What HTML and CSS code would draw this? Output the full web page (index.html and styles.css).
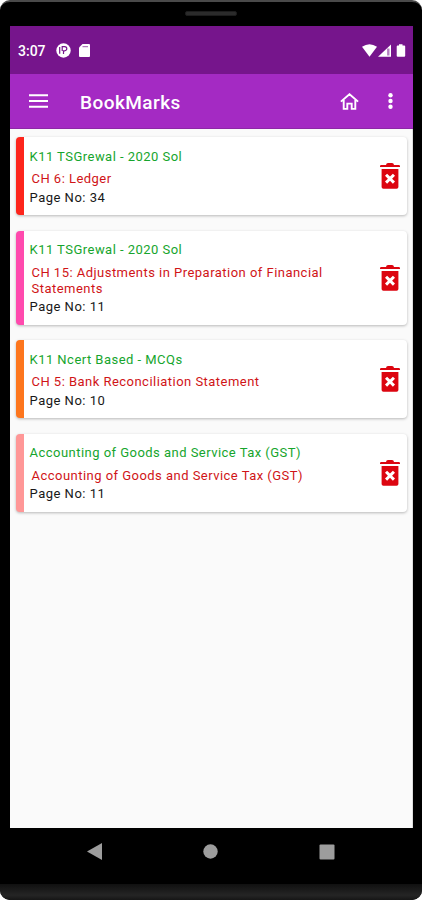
FILE: index.html
```html
<!DOCTYPE html>
<html lang="en">
<head>
<meta charset="utf-8">
<title>BookMarks</title>
<link rel="stylesheet" href="styles.css">
</head>
<body>
<svg class="defs" width="0" height="0" aria-hidden="true">
  <symbol id="trash" viewBox="0 0 20 26">
    <path d="M0 3.2Q0 2.1 1.2 2.1H6Q6.2.1 8 .1h4q1.800 0 2 2h4.800Q20 2.100 20 3.200v.9H0z"/>
    <path fill-rule="evenodd" d="M1.600 6h16.800v18q0 1.800-1.800 1.800H3.400q-1.800 0-1.800-1.800zM5 12.800 7.900 15.700 5 18.600 7.100 20.700 10 17.800 12.900 20.700 15 18.600 12.100 15.700 15 12.800 12.900 10.700 10 13.600 7.100 10.700z"/>
  </symbol>
</svg>
<div class="phone">
  <div class="speaker-row"><span class="speaker"></span></div>
  <main class="screen">
    <div class="status">
      <span class="time">3:07</span>
      <svg class="notif" width="15" height="15" viewBox="0 0 15 15"><circle cx="7.500" cy="7.500" r="7.200" fill="#fff"/><path d="M3.700 4v6.800M7.500 11V7.800h1.200a2.100 2.100 0 0 0 0-4.200H6.200V8" fill="none" stroke="#76158c" stroke-width="1.200"/></svg>
      <svg class="sd" width="11" height="13" viewBox="0 0 11 13"><path d="M3.500 0H10q1 0 1 1v11q0 1-1 1H1q-1 0-1-1V3.500z" fill="#fff"/><path d="M3.500 2.700h5.500" stroke="#76158c" stroke-width="1" opacity=".7"/></svg>
      <svg class="radios" width="44" height="13" viewBox="0 0 44 13"><path d="M0 2.800Q7.500-2.500 15 2.800L7.500 12.800z" fill="#fff"/><path d="M29 .5V12.800H16z" fill="#fff"/><path d="M26.300 4.500v7" stroke="#76158c" stroke-width="2.400" opacity=".55"/><path d="M37 .2h3.500v1.400h1.700q1 0 1 1v9.200q0 1-1 1h-6.500q-1 0-1-1V2.600q0-1 1-1H37z" fill="#fff"/></svg>
    </div>
    <header class="appbar">
      <svg width="19" height="14" viewBox="0 0 19 14"><path d="M0 1.200h19M0 7h19M0 12.800h19" stroke="#fff" stroke-width="2.100"/></svg>
      <h1>BookMarks</h1>
      <svg class="home" width="19" height="17" viewBox="0 0 19 17"><path d="M.9 8.600 9.500 1.200l8.600 7.400M3.700 7v8.900h3.600v-5.300h4.400v5.300h3.600V7" fill="none" stroke="#fff" stroke-width="1.900"/></svg>
      <svg class="more" width="5" height="16" viewBox="0 0 5 16" fill="#fff"><circle cx="2.500" cy="2.200" r="2.200"/><circle cx="2.500" cy="8" r="2.200"/><circle cx="2.500" cy="13.800" r="2.200"/></svg>
    </header>
    <section class="list">
      <article class="card red">
        <div class="info"><p class="book">K11 TSGrewal - 2020 Sol</p><p class="chapter">CH 6: Ledger</p><p class="page">Page No: 34</p></div>
        <svg class="trash"><use href="#trash"/></svg>
      </article>
      <article class="card pink">
        <div class="info"><p class="book">K11 TSGrewal - 2020 Sol</p><p class="chapter">CH 15: Adjustments in Preparation of Financial Statements</p><p class="page">Page No: 11</p></div>
        <svg class="trash"><use href="#trash"/></svg>
      </article>
      <article class="card orange">
        <div class="info"><p class="book">K11 Ncert Based - MCQs</p><p class="chapter">CH 5: Bank Reconciliation Statement</p><p class="page">Page No: 10</p></div>
        <svg class="trash"><use href="#trash"/></svg>
      </article>
      <article class="card salmon">
        <div class="info"><p class="book">Accounting of Goods and Service Tax (GST)</p><p class="chapter">Accounting of Goods and Service Tax (GST)</p><p class="page">Page No: 11</p></div>
        <svg class="trash"><use href="#trash"/></svg>
      </article>
    </section>
  </main>
  <nav class="navbar">
    <svg width="15" height="17" viewBox="0 0 15 17"><path d="M0 8.500 15 0v17z"/></svg>
    <svg width="15" height="15" viewBox="0 0 15 15"><circle cx="7.500" cy="7.500" r="7.200"/></svg>
    <svg width="16" height="16" viewBox="0 0 16 16"><rect x=".5" y=".5" width="15" height="15" rx="1"/></svg>
  </nav>
  <div class="chin"></div>
</div>
</body>
</html>
```
FILE: styles.css
```css
* { box-sizing: border-box; }
body { margin: 0; background: #fff; font-family: Roboto, sans-serif; }
h1, p { margin: 0; }
svg { display: block; flex: none; }
.defs { position: absolute; }
.phone { width: 422px; height: 900px; background: #000; border-top: 2px solid #4a4a4a; border-radius: 10px; overflow: hidden; display: flex; flex-direction: column; }
.speaker-row { height: 24px; flex: none; display: flex; justify-content: center; padding-top: 9px; }
.speaker { width: 52px; height: 5px; background: #2b2b2b; border: 1px solid #1c1c1c; border-radius: 2px; }
.screen { margin: 0 9px 0 10px; height: 802px; flex: none; background: #fafafa; border-right: 1px solid #ddd; display: flex; flex-direction: column; }
.status { height: 48px; margin-right: -1px; background: #76158c; color: #fff; display: flex; align-items: center; padding: 1px 7px 0 8px; }
.time { width: 38px; font-size: 14px; font-weight: 500; line-height: 16px; padding-top: 1px; }
.sd { margin-left: 8px; }
.radios { margin-left: auto; }
.appbar { height: 55px; margin-right: -1px; background: #a42ac3; border-bottom: 1px solid #8d28a6; color: #fff; display: flex; align-items: center; padding: 0 20px 0 19px; }
.appbar h1 { margin-left: 32px; font-size: 19px; font-weight: 500; letter-spacing: .45px; line-height: 22px; padding-top: 3px; }
.home { margin-left: auto; }
.more { margin-left: 29px; }
.list { display: flex; flex-direction: column; gap: 15.600px; padding: 8px 5px 0 6px; }
.card { background: #fff; border-left: 8px solid; border-radius: 4px; box-shadow: 0 1px 3px rgba(0,0,0,.27); display: flex; align-items: center; justify-content: space-between; padding: 11.500px 7px 9.500px 5.500px; }
.red { border-left-color: #fd251c; }
.pink { border-left-color: #ff4aae; }
.orange { border-left-color: #fd761d; }
.salmon { border-left-color: #ff9797; }
.info { width: 320px; font-size: 13px; line-height: 16px; letter-spacing: .47px; }
.book { color: #16a52d; }
.chapter { color: #d01417; padding-left: 2px; margin: 6.500px 0 2.500px; }
.page { color: #181818; letter-spacing: .5px; }
.trash { width: 20px; height: 26px; margin-top: -2px; fill: #dc0510; }
.navbar { height: 56px; flex: none; display: flex; justify-content: space-between; align-items: center; padding: 0 87px 9px 87px; fill: #9d9d9d; }
.chin { flex: 1; background: linear-gradient(#101010, #252525 70%, #161616); }
```
